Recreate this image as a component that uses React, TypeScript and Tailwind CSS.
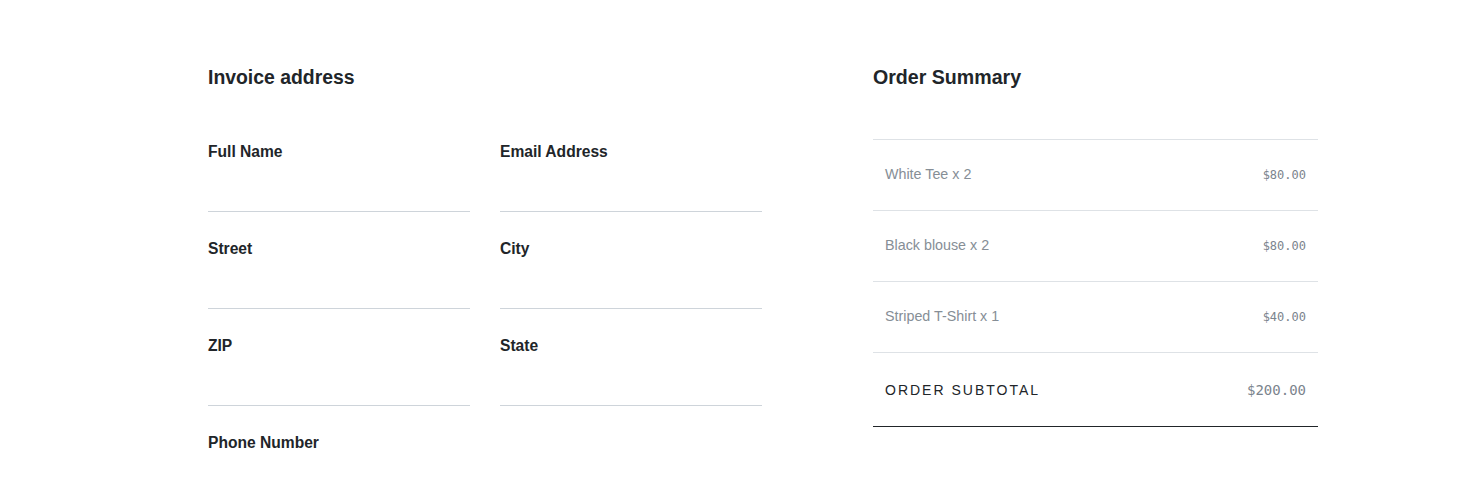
const fields = [
  ["Full Name", "Email Address"],
  ["Street", "City"],
  ["ZIP", "State"],
];

const items = [
  { name: "White Tee x 2", price: "$80.00" },
  { name: "Black blouse x 2", price: "$80.00" },
  { name: "Striped T-Shirt x 1", price: "$40.00" },
];

function Field({ label }: { label: string }) {
  return (
    <div className="mb-6">
      <label className="block pt-px text-[15.6px] font-bold leading-6 text-[#212529]">{label}</label>
      <input className="block h-[48px] w-full border-b border-[#ced4da] bg-transparent outline-none" />
    </div>
  );
}

export default function App() {
  return (
    <div className="min-h-[479px] overflow-hidden bg-white font-['Liberation_Sans',Arial,sans-serif] text-[#212529]">
      <div className="flex pl-[208px] pt-16">
        <form className="w-[554px]">
          <h2 className="text-[19.4px] font-bold leading-[26px]">Invoice address</h2>
          <div className="mt-[49px] grid grid-cols-2 gap-x-[30px]">
            {fields.flat().map((f) => (
              <Field key={f} label={f} />
            ))}
            <Field label="Phone Number" />
          </div>
        </form>

        <div className="ml-[111px] w-[445px]">
          <h2 className="text-[19.6px] font-bold leading-[26px]">Order Summary</h2>
          <div className="mt-[49px]">
            {items.map((it) => (
              <div
                key={it.name}
                className="flex h-[71px] items-center justify-between border-t border-[#dee2e6] px-3"
              >
                <span className="text-[14.3px] text-[#868e96]">{it.name}</span>
                <span className="font-['DejaVu_Sans_Mono',monospace] text-xs text-[#7b848d]">{it.price}</span>
              </div>
            ))}
            <div className="flex h-[75px] items-center justify-between border-t border-b border-t-[#dee2e6] border-b-[#212529] px-3">
              <span className="text-sm font-medium tracking-[2px] text-[#212529]">ORDER SUBTOTAL</span>
              <span className="font-['DejaVu_Sans_Mono',monospace] text-sm text-[#7b848d]">$200.00</span>
            </div>
          </div>
        </div>
      </div>
    </div>
  );
}
